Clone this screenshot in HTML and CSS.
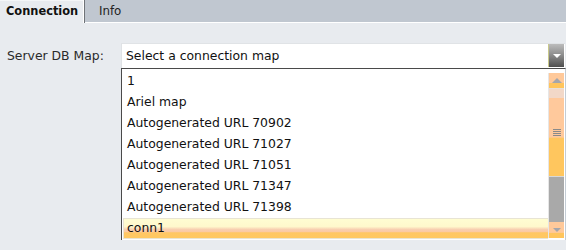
FILE: index.html
```html
<!DOCTYPE html>
<html>
<head>
<meta charset="utf-8">
<link rel="stylesheet" href="styles.css">
</head>
<body>
<div class="tabs">
  <div class="tab active">Connection</div>
  <div class="tab">Info</div>
</div>
<div class="content">
  <div class="row">
    <div class="label">Server DB Map:</div>
    <div class="combo">
      <div class="select">
        <span class="value">Select a connection map</span>
        <span class="arrow"><span class="tri-down white"></span></span>
      </div>
      <div class="list">
        <ul class="items">
          <li>1</li>
          <li>Ariel map</li>
          <li>Autogenerated URL 70902</li>
          <li>Autogenerated URL 71027</li>
          <li>Autogenerated URL 71051</li>
          <li>Autogenerated URL 71347</li>
          <li>Autogenerated URL 71398</li>
          <li class="hl">conn1</li>
        </ul>
        <div class="scrollbar">
          <div class="btn up"><span class="tri-up"></span></div>
          <div class="track-light"></div>
          <div class="thumb"><span class="grip"></span></div>
          <div class="track-grey"></div>
          <div class="btn down"><span class="tri-down grey"></span></div>
        </div>
      </div>
    </div>
  </div>
</div>
</body>
</html>
```

FILE: styles.css
```css
html, body {
  margin: 0;
  padding: 0;
  background: #e8ebef;
  font-family: "DejaVu Sans", Verdana, sans-serif;
  font-size: 12.4px;
  color: #111;
}
.tabs {
  display: flex;
  height: 22px;
  background: #c0c7d0;
  border-bottom: 1px solid #ffffff;
}
.tab {
  height: 22px;
  line-height: 22px;
  padding: 0 0 0 14px;
  color: #222;
  font-size: 11.8px;
}
.tab.active {
  width: 78px;
  padding-left: 6px;
  height: 23px;
  background: #e8ebef;
  font-weight: bold;
  font-size: 11.4px;
  color: #111;
  border-right: 1px solid #6f7378;
  box-shadow: inset -1px 0 0 #ffffff, inset 0 1px 0 #f4f6f8;
  margin-bottom: -1px;
}
.content {
  padding: 20px 0 0 0;
}
.row {
  display: flex;
  align-items: flex-start;
}
.label {
  width: 114px;
  padding-left: 7px;
  height: 25px;
  line-height: 26px;
  color: #2a2a2a;
}
.combo {
  width: 444px;
  display: flex;
  flex-direction: column;
}
.select {
  display: flex;
  height: 24px;
  background: #fff;
  border-top: 1px solid #e0e3e6;
  border-left: 1px solid #dfe2e5;
}
.value {
  flex: 1;
  line-height: 24px;
  padding-left: 4px;
}
.arrow {
  width: 15px;
  margin: 0 1px 1px 0;
  background: linear-gradient(#bcbcbc, #8a8a8a 50%, #4e4e4e);
  border-left: 1px solid #c9c98a;
  display: flex;
  align-items: center;
  justify-content: center;
}
.tri-down {
  width: 0;
  height: 0;
  border-left: 4px solid transparent;
  border-right: 4px solid transparent;
  border-top: 4px solid #fff;
}
.tri-down.grey { border-top-color: #a4a6ac; }
.tri-up {
  width: 0;
  height: 0;
  border-left: 5px solid transparent;
  border-right: 5px solid transparent;
  border-bottom: 5px solid #a4a6ac;
}
.list {
  display: flex;
  height: 171px;
  background: #fff;
  border-top: 1px solid #4a4a4a;
  border-left: 1px solid #4a4a4a;
  border-right: 1px solid #c4ccd4;
  margin-right: -1px;
}
.items {
  list-style: none;
  margin: 0;
  padding: 1px 0 0 1px;
  flex: 1;
}
.items li {
  height: 21px;
  line-height: 21px;
  padding-left: 4px;
  white-space: nowrap;
}
.items li.hl {
  margin-top: 1px;
  height: 19px;
  line-height: 17px;
  padding-left: 3px;
  border: 1px solid #e8e4d4;
  border-right: none;
  background: linear-gradient(#fffdd2 0%, #fff8cc 40%, #f8cfb0 55%, #fbc9a2 68%, #ffc764 72%, #ffc860 100%);
}
.scrollbar {
  width: 15px;
  margin: 4px 1px 2px 0;
  display: flex;
  flex-direction: column;
  border-left: 1px solid #e6e6e6;
}
.btn {
  height: 15px;
  display: flex;
  align-items: center;
  justify-content: center;
  background: linear-gradient(#ffc99a 0%, #ffc99a 65%, #ffc55c 70%, #ffc55c 100%);
}
.btn.down { height: 16px; }
.track-light {
  height: 9px;
  background: #f2d8c8;
  border-top: 1px solid #e8e0d8;
}
.thumb {
  height: 78px;
  background: linear-gradient(#ffc99c 0%, #ffc99c 50%, #ffc65e 52%, #ffc65e 100%);
  display: flex;
  align-items: flex-start;
  justify-content: center;
  border-bottom: 1px solid #d8d8d8;
}
.grip {
  margin-top: 31px;
  width: 8px;
  height: 7px;
  background: repeating-linear-gradient(#8a8a8a 0, #8a8a8a 1px, transparent 1px, transparent 2px);
}
.track-grey {
  flex: 1;
  background: #a9a9a9;
}
```
